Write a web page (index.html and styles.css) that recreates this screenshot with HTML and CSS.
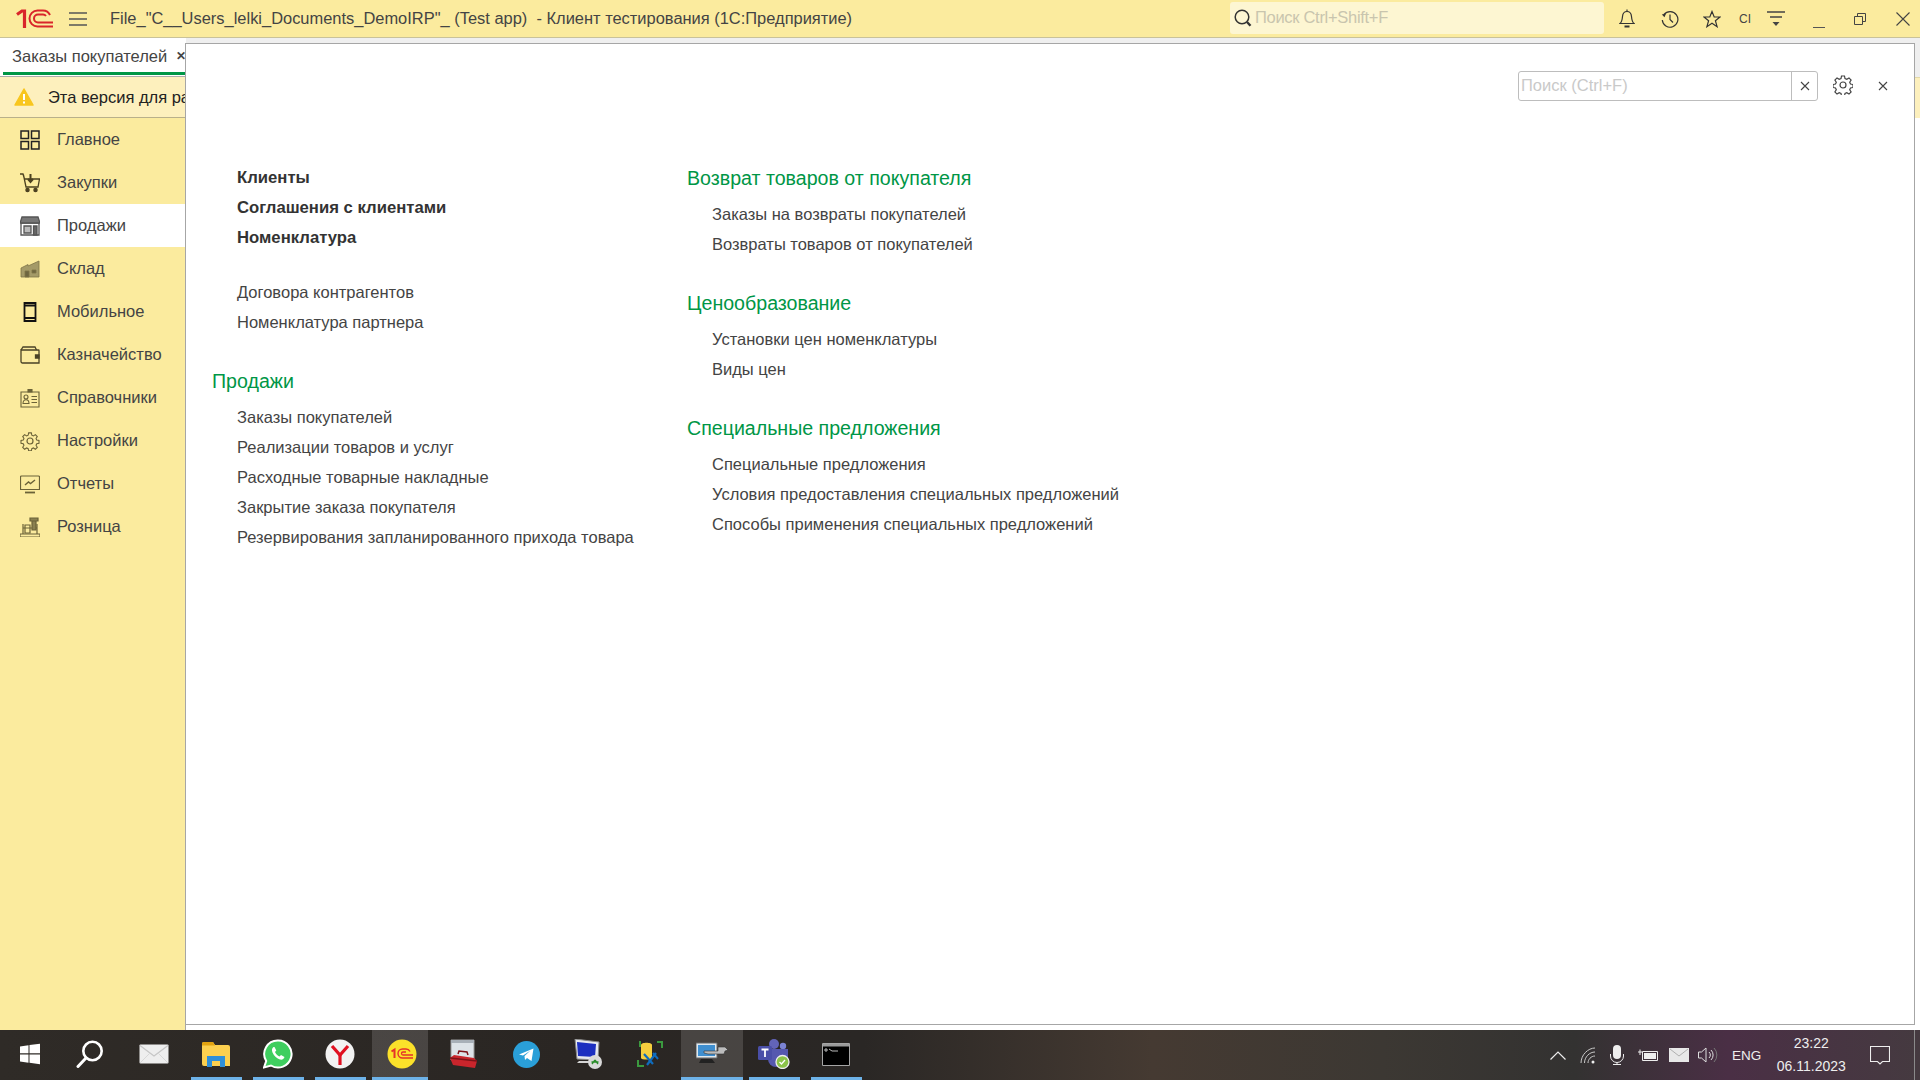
FILE: index.html
```html
<!DOCTYPE html>
<html lang="ru">
<head>
<meta charset="utf-8">
<title>1C</title>
<link rel="stylesheet" href="styles.css">
</head>
<body>
<div class="app">
  <header class="titlebar">
    <svg class="logo" width="38" height="20" viewBox="0 0 38 20" fill="none" stroke="#d9252a">
      <path d="M1 5.500 6 2h2.500v17" stroke-width="3.200"/>
      <path d="M37 17.500H21.500a8 8 0 0 1 0-16H27a8 8 0 0 1 7 4.500" stroke-width="2"/>
      <path d="M37 13.500H22a4 4 0 0 1 0-8h5a4 4 0 0 1 3 1.500" stroke-width="2"/>
    </svg>
    <svg class="burger" width="18" height="14" viewBox="0 0 18 14" stroke="#555" stroke-width="1.400"><path d="M0 1h18M0 7h18M0 13h18"/></svg>
    <div class="apptitle">File_"C__Users_lelki_Documents_DemoIRP"_ (Test app) &nbsp;- Клиент тестирования (1С:Предприятие)</div>
    <div class="globalsearch">
      <svg width="20" height="20" viewBox="0 0 20 20" fill="none" stroke="#333"><circle cx="9" cy="9" r="6.800" stroke-width="1.500"/><path d="m14 14 3.500 3.800" stroke-width="2.400"/></svg>
      <span>Поиск Ctrl+Shift+F</span>
    </div>
    <div class="tools">
      <svg class="t-bell" width="16" height="20" viewBox="0 0 16 20" fill="none" stroke="#333" stroke-width="1.200"><path d="M1 14.500c2-1.500 2.200-3.500 2.500-7C3.800 4 5.500 2.500 8 2.500S12.200 4 12.500 7.500c.3 3.500.5 5.500 2.500 7z"/><path d="M8 .5v2"/><path d="M5.500 17.500h5" stroke-width="2"/></svg>
      <svg class="t-hist" width="18" height="18" viewBox="0 0 18 18" fill="none" stroke="#333" stroke-width="1.200"><path d="M3 4.500A7.800 7.800 0 1 1 1.300 10"/><path d="M.8 4.500 3.500 7.300 5 3.500z" fill="#333" stroke="none"/><path d="M9 4.500V9.500l3 3"/></svg>
      <svg class="t-star" width="18" height="18" viewBox="0 0 18 18" fill="none" stroke="#333" stroke-width="1.200"><path d="M9 1.500 11.200 7H17l-4.600 3.700 1.700 6L9 13.300l-5.100 3.400 1.700-6L1 7h5.800z"/></svg>
      <span class="t-cl">CI</span>
      <svg class="t-menu" width="18" height="16" viewBox="0 0 18 16" stroke="#444" stroke-width="1.300"><path d="M0 1h18M3 6h12"/><path d="M5.500 11h7L9 15z" fill="#444" stroke="none"/></svg>
      <svg class="t-min" width="12" height="12" viewBox="0 0 12 12" stroke="#555"><path d="M0 11.500h12"/></svg>
      <svg class="t-max" width="12" height="12" viewBox="0 0 12 12" fill="none" stroke="#444"><path d="M.5 3.500h8v8h-8z"/><path d="M3.500 3V.5h8V8.500H9"/></svg>
      <svg class="t-close" width="14" height="14" viewBox="0 0 14 14" stroke="#444" stroke-width="1.100"><path d="m.5.500 13 13M13.500.500l-13 13"/></svg>
    </div>
  </header>

  <div class="workspace">
    <aside class="left">
      <div class="tabstrip">
        <div class="tab"><span class="tabtext">Заказы покупателей</span><span class="tabx">✕</span></div>
      </div>
      <div class="warning">
        <svg width="20" height="18" viewBox="0 0 20 18"><path d="M10 1 19 17H1z" fill="#f8c61e" stroke="#f8c61e" stroke-width="1.500" stroke-linejoin="round"/><path d="M10 6v6M10 13.500v2" stroke="#fff" stroke-width="2"/></svg>
        <span>Эта версия для разработчиков</span>
      </div>
      <nav class="sections">
        <a class="section">
          <svg class="sicon" viewBox="0 0 20 20" fill="none" stroke="#222" stroke-width="1.500"><path d="M1 1h7.500v7.500H1zM11.500 1H19v7.500h-7.500zM1 11.500h7.500V19H1zM11.500 11.500H19V19h-7.500z"/></svg>
          <span>Главное</span>
        </a>
        <a class="section">
          <svg class="sicon" viewBox="0 0 20 20" fill="none" stroke="#4b4120" stroke-width="1.300"><path d="M0 1h3l1.500 5h15l-1.500 8H6L3.500 2"/><path d="M10.500 1v7M8 6l2.500 3L13 6" stroke-width="2"/><circle cx="7.500" cy="17" r="1.600" fill="#4b4120"/><circle cx="15.500" cy="17" r="1.600" fill="#4b4120"/></svg>
          <span>Закупки</span>
        </a>
        <a class="section active">
          <svg class="sicon" viewBox="0 0 20 20" fill="none" stroke="#555" stroke-width="1.300"><path d="M1 7h18v12H1z"/><path d="M2 1h16l2 6H0z" fill="#777"/><path d="M4 10h7v7H4z" fill="#bbb"/><path d="M13.500 10H17v9h-3.500z" fill="#666"/></svg>
          <span>Продажи</span>
        </a>
        <a class="section">
          <svg class="sicon" viewBox="0 0 20 20" fill="#a49a68" stroke="#7d7448" stroke-width=".8"><path d="M1 9 8 5.500v1.500L19 2v16H1z"/><path d="M5 12h4v6H5zM12 11h4v3h-4z" fill="#6e6640"/></svg>
          <span>Склад</span>
        </a>
        <a class="section">
          <svg class="sicon" viewBox="0 0 20 20" fill="none" stroke="#111" stroke-width="1.800"><path d="M4.500 1h11v18h-11z"/><path d="M4.500 3.500h11M4.500 16h11" stroke-width="2"/></svg>
          <span>Мобильное</span>
        </a>
        <a class="section">
          <svg class="sicon" viewBox="0 0 20 20" fill="none" stroke="#4a4226" stroke-width="1.300"><path d="M1 5h17.500a.5.5 0 0 1 .5.500V18H2.500A1.500 1.500 0 0 1 1 16.500z"/><path d="M1 5l2-3h12l1.500 3"/><path d="M15.500 10H19v3h-3.500z" fill="#4a4226"/></svg>
          <span>Казначейство</span>
        </a>
        <a class="section">
          <svg class="sicon" viewBox="0 0 20 20" fill="none" stroke="#6b6238" stroke-width="1.100"><path d="M1 4h18v15H1z"/><path d="M8 1.500h4V4H8z" fill="#6b6238"/><circle cx="6" cy="9" r="2"/><path d="M3 15.500c0-5 6-5 6 0zM11.500 8.500H17M11.500 11.500H17M11.500 14.500H17"/></svg>
          <span>Справочники</span>
        </a>
        <a class="section">
          <svg class="sicon" viewBox="0 0 20 20" fill="none" stroke="#6b6238" stroke-width="1.200"><circle cx="10" cy="10" r="3"/><path d="M8.500 1h3l.5 2.500 1.800.8 2.200-1.400 2.100 2.100-1.400 2.200.8 1.800 2.500.5v3l-2.500.5-.8 1.800 1.400 2.200-2.100 2.100-2.200-1.400-1.800.8-.5 2.500h-3l-.5-2.500-1.800-.8-2.200 1.400-2.100-2.100 1.400-2.200-.8-1.800-2.500-.5v-3l2.500-.5.800-1.800-1.400-2.200 2.100-2.100 2.200 1.400 1.800-.8z" transform="translate(1 1) scale(.9)"/></svg>
          <span>Настройки</span>
        </a>
        <a class="section">
          <svg class="sicon" viewBox="0 0 20 20" fill="none" stroke="#6b6238" stroke-width="1.200"><path d="M1.500 2h17a1 1 0 0 1 1 1v12.500H.5V3a1 1 0 0 1 1-1z"/><path d="m5 11 3.500-3 2 1.500L15 6" stroke-width="1.400"/><path d="M5 18.500h10" stroke-width="1.800"/></svg>
          <span>Отчеты</span>
        </a>
        <a class="section">
          <svg class="sicon" viewBox="0 0 20 20" fill="none" stroke="#6b6238" stroke-width="1.200"><path d="M3 7v10h14V7M0 17h20v3H0zM3 11h14"/><path d="M10 1h8v3h-8zM12 4v9h4V4z" fill="#8a8050"/><path d="M5 8h5v8H5z"/></svg>
          <span>Розница</span>
        </a>
      </nav>
    </aside>
    <div class="stage">
      <div class="stagetop"></div>
      <div class="stagewarn"></div>
    </div>

    <section class="panel">
      <div class="panelbar">
        <div class="psearch">
          <span class="ptext">Поиск (Ctrl+F)</span>
          <span class="pclear"><svg width="10" height="10" viewBox="0 0 10 10" stroke="#444" stroke-width="1.100"><path d="m1 1 8 8M9 1 1 9"/></svg></span>
        </div>
        <svg class="pgear" width="20" height="20" viewBox="0 0 20 20" fill="none" stroke="#444" stroke-width="1.200"><circle cx="10" cy="10" r="3"/><path d="M8.500 1h3l.5 2.500 1.800.8 2.200-1.400 2.100 2.100-1.400 2.200.8 1.800 2.500.5v3l-2.500.5-.8 1.800 1.400 2.200-2.100 2.100-2.200-1.400-1.800.8-.5 2.500h-3l-.5-2.500-1.800-.8-2.200 1.400-2.100-2.100 1.400-2.200-.8-1.800-2.500-.5v-3l2.500-.5.800-1.800-1.400-2.200 2.100-2.100 2.200 1.400 1.800-.8z"/></svg>
        <svg class="pclose" width="10" height="10" viewBox="0 0 10 10" stroke="#444" stroke-width="1.100"><path d="m1 1 8 8M9 1 1 9"/></svg>
      </div>
      <div class="columns">
        <div class="col col1">
          <ul class="links strong">
            <li>Клиенты</li>
            <li>Соглашения с клиентами</li>
            <li>Номенклатура</li>
          </ul>
          <ul class="links more">
            <li>Договора контрагентов</li>
            <li>Номенклатура партнера</li>
          </ul>
          <h2>Продажи</h2>
          <ul class="links">
            <li>Заказы покупателей</li>
            <li>Реализации товаров и услуг</li>
            <li>Расходные товарные накладные</li>
            <li>Закрытие заказа покупателя</li>
            <li>Резервирования запланированного прихода товара</li>
          </ul>
        </div>
        <div class="col col2">
          <h2>Возврат товаров от покупателя</h2>
          <ul class="links">
            <li>Заказы на возвраты покупателей</li>
            <li>Возвраты товаров от покупателей</li>
          </ul>
          <h2>Ценообразование</h2>
          <ul class="links">
            <li>Установки цен номенклатуры</li>
            <li>Виды цен</li>
          </ul>
          <h2>Специальные предложения</h2>
          <ul class="links">
            <li>Специальные предложения</li>
            <li>Условия предоставления специальных предложений</li>
            <li>Способы применения специальных предложений</li>
          </ul>
        </div>
      </div>
    </section>
  </div>

  <footer class="taskbar">
    <div class="tile">
      <svg width="22" height="22" viewBox="0 0 22 22" fill="#fff"><path d="M1 3.500 9.500 2.300v8H1zM10.500 2.100 21 .7v9.600H10.500zM1 11.500h8.500v8.200L1 18.500zM10.500 11.500H21v9.800l-10.500-1.500z"/></svg>
    </div>
    <div class="tile">
      <svg class="bigsearch" width="28" height="28" viewBox="0 0 28 28" fill="none" stroke="#fff"><circle cx="16.500" cy="11" r="9.200" stroke-width="2.600"/><path d="M10 18 2 26.500" stroke-width="3" stroke-linecap="round"/></svg>
    </div>
    <div class="tile">
      <svg width="30" height="20" viewBox="0 0 30 20"><rect x=".5" y=".5" width="29" height="19" rx="1" fill="#eee"/><path d="M1 1.500 15 12 29 1.500" fill="none" stroke="#c6c6c6" stroke-width="1.200"/><path d="M1 19 11 9M29 19 19 9" stroke="#d8d8d8"/></svg>
    </div>
    <div class="tile on">
      <svg width="28" height="25" viewBox="0 0 28 25"><path d="M0 2a2 2 0 0 1 2-2h9l2 3h13a2 2 0 0 1 2 2v19H2a2 2 0 0 1-2-2z" fill="#fcd04f"/><path d="M0 1.500A1.500 1.500 0 0 1 1.500 0H11l2 3.500H0z" fill="#e2a310"/><path d="M5 14h18v11h-5v-6h-8v6H5z" fill="#2f8fd8"/></svg>
    </div>
    <div class="tile on">
      <svg width="30" height="30" viewBox="0 0 30 30"><path d="M15 1.500A13.500 13.500 0 1 1 8 26.500L1 28.500 3.200 22A13.500 13.500 0 0 1 15 1.500z" fill="#3fce5f" stroke="#fff" stroke-width="2"/><path d="M10.500 8c-1.500 1-2 3-1 5.500 1.500 3.500 4.500 6 7.500 7 2 .5 4-.5 4.500-2.500l-3.500-2-1.500 1.500c-2-1-3.500-2.500-4.500-4.500l1.300-1.500L11.500 8z" fill="#fff"/></svg>
    </div>
    <div class="tile on">
      <svg width="30" height="30" viewBox="0 0 30 30"><circle cx="15" cy="15" r="14.500" fill="#f2f2f2"/><path d="M7 7l8 9 8-9" fill="none" stroke="#e01020" stroke-width="3.200"/><path d="M15 14.500V26" stroke="#e01020" stroke-width="3.200"/></svg>
    </div>
    <div class="tile on active narrow">
      <svg width="30" height="30" viewBox="0 0 30 30"><circle cx="15" cy="15" r="14.500" fill="#fbe12a"/><g fill="none" stroke="#e5312a"><path d="M4.500 12.500 7.500 10.500V19" stroke-width="2"/><path d="M26 19H15.500a4.500 4.500 0 0 1 0-9H19a4.500 4.500 0 0 1 4 2.500" stroke-width="1.400"/><path d="M26 16H16a1.500 1.500 0 0 1 0-3h3" stroke-width="1.300"/></g></svg>
    </div>
    <div class="tile">
      <svg width="28" height="30" viewBox="0 0 28 30"><path d="M1 1h23v20H1z" fill="#dde3e8" stroke="#999"/><path d="M1 1h23v3H1z" fill="#a8b0b8"/><path d="M4 16 24 19l3 3-2 7-22-3-3-7z" fill="#c9252c"/><path d="M0 19l27 3" stroke="#7d1218" stroke-width="1.300"/><path d="M8 15l1-3 8 1 1 3" fill="none" stroke="#7d1218" stroke-width="1.500"/></svg>
    </div>
    <div class="tile">
      <svg width="27" height="27" viewBox="0 0 27 27"><circle cx="13.500" cy="13.500" r="13.500" fill="#2a9fd8"/><path d="M6 13.500 20.500 7.500 18.500 20l-4.500-3-2 2-.5-4 6-5.500-7.500 5z" fill="#fff"/></svg>
    </div>
    <div class="tile">
      <svg width="30" height="30" viewBox="0 0 30 30"><path d="M2 0 26 3l-1 18-21-1z" fill="#e6e9ef" stroke="#888"/><path d="M4 3l19 2-1 13-17-1z" fill="#1c2fc0"/><path d="M6 22h14v2H4z" fill="#d5d5d5"/><circle cx="22" cy="23" r="7" fill="#d9d9d9"/><path d="M18.500 23h7M19 25l3-4M25 25l-3-4" stroke="#2a8c2a" stroke-width="1.300"/></svg>
    </div>
    <div class="tile">
      <svg width="28" height="28" viewBox="0 0 28 28"><path d="M3 1h2v6H3v-1zM21 1h6v7h-2V3h-4zM1 20h2v5h5v2H1z" fill="#3b9a3f"/><path d="M5 5c0-3 11-3 11 0v13c0 2-11 2-11 0z" fill="#f6cf3e"/><path d="M8 14l9 10M20 13l-9 12" stroke="#0f6cbd" stroke-width="2.200"/><path d="M17 13l5 6" stroke="#0f6cbd" stroke-width="2"/></svg>
    </div>
    <div class="tile on active">
      <svg width="32" height="24" viewBox="0 0 32 24"><path d="M0 1h21v15H0z" fill="#dfe8ee" stroke="#666"/><path d="M2 3h17v11H2z" fill="#3f8fd0"/><path d="M5 17h11l3 4H3z" fill="#222"/><path d="M8 9h14V5h7l3 3-3 1-1 3H12l-4-1z" fill="#bcbcbc" stroke="#333" stroke-width=".6"/></svg>
    </div>
    <div class="tile on">
      <svg width="32" height="30" viewBox="0 0 32 30"><circle cx="16" cy="5" r="5" fill="#6264b8"/><circle cx="25" cy="7" r="3.200" fill="#7b83d4"/><path d="M10 10h20v11a7 7 0 0 1-7 7h-5a8 8 0 0 1-8-8z" fill="#5558af"/><rect y="7" width="14" height="14" rx="1.500" fill="#4a4fa8"/><path d="M3.500 10.500h7M7 10.500v7.500" stroke="#fff" stroke-width="1.800"/><circle cx="24.500" cy="23" r="6.500" fill="#8bc34a" stroke="#eee" stroke-width="1.300"/><path d="m21.500 23 2 2 3.500-4" fill="none" stroke="#fff" stroke-width="1.300"/></svg>
    </div>
    <div class="tile on">
      <svg width="28" height="23" viewBox="0 0 28 23"><path d="M.5.500h27v22H.500z" fill="#000" stroke="#a5a5a5"/><path d="M1 1h26v2.500H1z" fill="#9a9a9a"/><path d="M3 6h2v2H3zM7 6l3 2h6" fill="none" stroke="#bbb"/></svg>
    </div>
    <div class="tray">
      <svg class="i-chev" width="16" height="9" viewBox="0 0 16 9" fill="none" stroke="#eee" stroke-width="1.200"><path d="m.5 8.500 7.500-7.500 7.500 7.500"/></svg>
      <svg class="i-wifi" width="16" height="17" viewBox="0 0 16 17" fill="none" stroke="#c9c9c9"><path d="M1 16C1 8 8 1 15 1M4.500 16c0-6 5-11 10.500-11M8 16c0-3.500 3-7 7-7"/><circle cx="13" cy="15" r="1.500" fill="#eee" stroke="none"/></svg>
      <svg class="i-mic" width="14" height="20" viewBox="0 0 14 20" fill="none" stroke="#eee"><rect x="3" width="8" height="14" rx="4" fill="#eee" stroke="none"/><path d="M.5 9v2a6.500 6.500 0 0 0 13 0V9M7 17.500v2M3 19.500h8"/></svg>
      <svg class="i-batt" width="20" height="12" viewBox="0 0 20 12" fill="none" stroke="#eee"><path d="M4.500 2.500h15v9h-15z"/><path d="M6 4h12v6H6z" fill="#eee" stroke="none"/><path d="M0 3h4M2 .5V6"/></svg>
      <svg class="i-mail" width="20" height="14" viewBox="0 0 20 14"><rect width="20" height="14" fill="#e8e8e8"/><path d="m1 1 9 7 9-7" fill="none" stroke="#b0b0b0"/></svg>
      <svg class="i-spk" width="20" height="16" viewBox="0 0 20 16" fill="none" stroke="#ddd"><path d="M.5 5h3L8 1v14l-4.500-4h-3z"/><path d="M11 5a4 4 0 0 1 0 6M13 3a7 7 0 0 1 0 10"/><path d="M16 1a10 10 0 0 1 0 14" stroke="#777"/></svg>
      <span class="lang">ENG</span>
      <div class="clock"><span>23:22</span><span>06.11.2023</span></div>
      <svg class="i-note" width="20" height="19" viewBox="0 0 20 19" fill="none" stroke="#eee" stroke-width="1.100"><path d="M.5.500h19v15h-7L10 18l-2.500-2.500h-7z"/></svg>
      <span class="desktop"></span>
    </div>
  </footer>
</div>
</body>
</html>
```

FILE: styles.css
```css
* { box-sizing: border-box; }
html, body { margin: 0; height: 100%; overflow: hidden; }
body { font-family: "Liberation Sans", Arial, sans-serif; color: #333; }
.app { display: flex; flex-direction: column; width: 1920px; height: 1080px; }

.titlebar { flex: 0 0 38px; height: 38px; display: flex; align-items: center; background: #fbeb9e; border-bottom: 1px solid #c9c29a; position: relative; }
.logo { margin-left: 16px; flex: none; }
.burger { margin-left: 15px; flex: none; }
.apptitle { margin-left: 23px; font-size: 16.450px; color: #444; white-space: nowrap; width: 1120px; flex: none; }
.globalsearch { width: 374px; height: 32px; flex: none; background: #fdf6d2; border-radius: 3px; display: flex; align-items: center; padding-left: 3px; gap: 2px; position: absolute; left: 1230px; top: 2px; }
.globalsearch span { font-size: 16.500px; color: #c9c5ae; letter-spacing: -.3px; padding-bottom: 2px; }
.tools { position: absolute; left: 1600px; top: 0; height: 37px; width: 320px; display: flex; align-items: center; }
.t-bell { margin-left: 19px; }
.t-hist { margin-left: 26px; }
.t-star { margin-left: 24px; }
.t-cl { margin-left: 18px; font-size: 12px; color: #444; }
.t-menu { margin-left: 16px; }
.t-min { margin-left: 28px; margin-top: 6px; }
.t-max { margin-left: 29px; }
.t-close { margin-left: 30px; }

.workspace { flex: 1; display: flex; position: relative; min-height: 0; background: #fff; }
.left { width: 186px; flex: none; display: flex; flex-direction: column; background: #fbeb9e; border-right: 1px solid #a6a6a6; }
.tabstrip { height: 39px; flex: none; width: 240px; background: #fff; border-bottom: 1px solid #aaa; padding-left: 3px; }
.tab { height: 37px; width: 236px; border-bottom: 3px solid #009646; padding: 2px 0 0 9px; display: flex; align-items: center; gap: 9px; white-space: nowrap; }
.tabtext { font-size: 16.500px; color: #444; }
.tabx { font-size: 12px; color: #444; font-weight: bold; }
.warning { height: 41px; flex: none; width: 240px; background: #fdf0bd; border-bottom: 1px solid #b9b08a; display: flex; align-items: center; padding-left: 14px; gap: 14px; white-space: nowrap; }
.warning svg { flex: none; }
.warning span { font-size: 16.500px; color: #222; }
.sections { display: flex; flex-direction: column; }
.section { height: 43px; display: flex; align-items: center; padding-left: 20px; gap: 17px; font-size: 16.500px; color: #444; }
.section.active { background: #fff; width: 185px; }
.sicon { width: 20px; height: 20px; flex: none; }

.stage { flex: 1; display: flex; flex-direction: column; background: #fff; }
.stagetop { height: 39px; flex: none; background: #efefef; }
.stagewarn { height: 41px; flex: none; background: #fdf0bd; border-top: 1px solid #e3d9a8; }

.panel { position: absolute; left: 185px; top: 5px; width: 1730px; height: 982px; background: #fff; border: 1px solid #a6a6a6; display: flex; flex-direction: column; }
.panelbar { height: 119px; display: flex; align-items: flex-start; padding: 27px 0 0 1332px; flex: none; }
.psearch { width: 300px; height: 30px; border: 1px solid #bdbdbd; border-radius: 3px; display: flex; align-items: center; flex: none; }
.ptext { flex: 1; font-size: 16.500px; color: #c9c9c9; padding: 0 0 2px 2px; }
.pclear { width: 26px; height: 100%; border-left: 1px solid #bdbdbd; display: flex; align-items: center; justify-content: center; }
.pgear { margin: 4px 0 0 15px; }
.pclose { margin: 10px 0 0 25px; }

.columns { display: flex; padding-left: 26px; }
.col { flex: none; }
.col1 { width: 475px; }
.col2 { width: 600px; }
h2 { margin: 0; height: 30px; line-height: 30px; font-size: 19.600px; font-weight: normal; color: #009646; white-space: nowrap; }
.links { list-style: none; margin: 0; padding: 0 0 0 25px; }
.links li { height: 30px; line-height: 30px; font-size: 16.500px; color: #444; white-space: nowrap; }
.links.strong li { font-weight: bold; font-size: 16.700px; color: #333; }
.more { margin-top: 24px; }
.col1 h2 { margin-top: 29px; }
.col1 h2 + .links, .col2 h2 + .links { margin-top: 6px; }
.col2 .links + h2 { margin-top: 29px; }

.taskbar { flex: 0 0 50px; height: 50px; display: flex; align-items: stretch; position: relative; background: linear-gradient(90deg, #2f2b27 0, #2a2623 30%, #2a2725 45%, #453a32 60%, #3c3833 72%, #333231 82%, #4a2f45 90%, #453a40 100%); }
.tile { width: 62px; flex: none; display: flex; align-items: center; justify-content: center; position: relative; padding-bottom: 2px; }
.tile:first-child { width: 61px; padding-right: 1px; }
.tile.on::after { content: ""; position: absolute; left: 6px; right: 5px; bottom: 0; height: 3px; background: #6db2e8; }
.tile.active { background: rgba(255, 255, 255, .14); }
.tile.active::after { left: 0; right: 0; }
.tile.narrow { background: linear-gradient(rgba(255, 255, 255, .14), rgba(255, 255, 255, .14)) no-repeat 1px 0 / 56px 100%; }
.tile.narrow::after { left: 1px; right: 5px; }
.bigsearch { margin-left: -4px; }
.tray { position: absolute; left: 1550px; top: 0; right: 0; height: 50px; display: flex; align-items: center; color: #eee; }
.i-wifi { margin-left: 14px; }
.i-mic { margin-left: 14px; }
.i-batt { margin-left: 14px; }
.i-mail { margin-left: 11px; }
.i-spk { margin-left: 9px; }
.lang { margin-left: 14px; font-size: 13.500px; }
.clock { margin-left: 15px; width: 70px; display: flex; flex-direction: column; align-items: center; font-size: 14px; line-height: 23px; white-space: nowrap; }
.i-note { margin-left: 24px; }
.desktop { position: absolute; left: 364px; top: 0; width: 1px; height: 50px; background: #8a8a8a; }
```
